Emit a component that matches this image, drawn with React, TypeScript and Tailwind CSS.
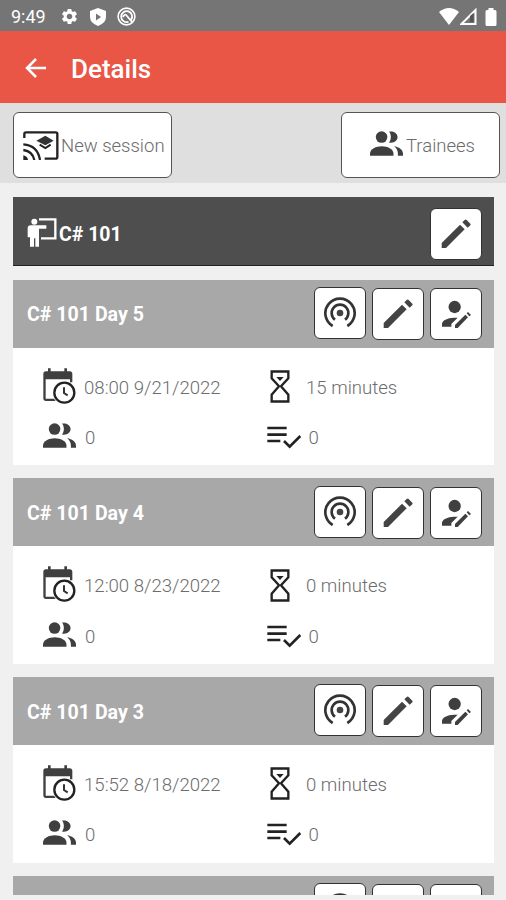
import type { ReactNode } from "react";
import { MdSettings } from "react-icons/md";

const sessions = [
  { id: "day-5", title: "C# 101 Day 5", date: "08:00 9/21/2022", duration: "15 minutes", trainees: 0, tasks: 0 },
  { id: "day-4", title: "C# 101 Day 4", date: "12:00 8/23/2022", duration: "0 minutes", trainees: 0, tasks: 0 },
  { id: "day-3", title: "C# 101 Day 3", date: "15:52 8/18/2022", duration: "0 minutes", trainees: 0, tasks: 0 },
];

const BackIcon = () => (
  <svg className="w-[21px] h-5" viewBox="0 0 21 20" fill="none" stroke="#fff" strokeWidth="2.500">
    <path d="M21 10H2.500M11 1l-9 9 9 9" />
  </svg>
);

const PeopleIcon = () => (
  <svg className="w-[33px] h-[25px] shrink-0" viewBox="0 0 97 72" fill="#3f3f3f">
    <circle cx="34" cy="17" r="17" />
    <path d="M56 1c14-3 25 5 25 16s-11 19-25 16c7-9 7-23 0-32z" />
    <path d="M0 72v-6c0-14 18-22 34.500-22S69 52 69 66v6z" />
    <path d="M71 44c14 2 26 10 26 22v6H82v-7c0-8-4-15-11-21z" />
  </svg>
);

const CastIcon = () => (
  <svg className="w-9 h-[29px] shrink-0" viewBox="69 391 108 87" fill="none" stroke="#222" strokeWidth="7">
    <path d="M73 412V400q0-5 5-5h89q5 0 5 5v69q0 5-5 5h-33" />
    <path d="M70 431q43 3 50 47M70 448q28 4 33 30" />
    <path d="M70 464q13 3 14 14H70z" fill="#222" stroke="none" />
    <path d="M109 420l27-15 25 15-25 14z" fill="#333" stroke="none" />
    <path d="M119 432l17 10 16-10" strokeWidth="6" />
  </svg>
);

const TeacherIcon = () => (
  <svg className="w-[30px] h-[29px] shrink-0" viewBox="82 100 90 87" fill="#fff">
    <circle cx="104" cy="111" r="9" />
    <path d="M84 131q0-9 9-9h47v10h-22v54h-11v-25h-4v25H91v-28h-7z" />
    <path d="M118 104h49v57h-43" fill="none" stroke="#fff" strokeWidth="7" />
  </svg>
);

const PencilIcon = () => (
  <svg className="w-[30px] h-[30px]" viewBox="564 104 90 90" fill="#444">
    <path d="M566 176l55-55 14 14-56 56h-13z" />
    <path d="M628 114l7-7q3-3 6 0l11 11q2 3 0 5l-8 7z" />
  </svg>
);

const BroadcastIcon = () => (
  <svg className="w-[34px] h-[32px]" viewBox="208 337 102 96" fill="none" stroke="#333" strokeWidth="8">
    <circle cx="259" cy="385" r="10" fill="#444" stroke="none" />
    <path d="M244 405a25 25 0 1 1 30 0" />
    <path d="M237 424a44 44 0 1 1 44 0" />
  </svg>
);

const UserEditIcon = () => (
  <svg className="w-[30px] h-[30px]" viewBox="567 346 90 90" fill="#3f3f3f">
    <circle cx="608" cy="370" r="18.500" />
    <path d="M570 429v-8c0-10 16-19 36-19h11l-19 19v8z" />
    <path d="M609 433v-9l31-31 8 8-31 32z" />
    <path d="M644 389l4-4 9 9-5 4z" />
  </svg>
);

const CalendarIcon = () => (
  <svg className="w-[33px] h-9 shrink-0" viewBox="134 84 99 108" fill="#3f3f3f">
    <path d="M149 85h8v9h41v-9h8v9h8q8 0 8 8v25h-7v-9h-73v58h25l5 7h-29q-8 0-8-8v-73q0-8 8-8h6z" />
    <circle cx="198" cy="158" r="30" fill="#fff" stroke="#222" strokeWidth="7" />
    <path d="M197 142v17l11 7" fill="none" stroke="#333" strokeWidth="6" />
  </svg>
);

const HourglassIcon = () => (
  <svg className="w-5 h-[33px]" viewBox="52 89 60 99" fill="none" stroke="#222" strokeWidth="7">
    <path d="M57 93.500h50V114l-22 24 22 25v20.500H57V163l22-25-22-24z" />
    <path d="M71 110h22l-11 12z" fill="#222" stroke="none" />
  </svg>
);

const ListCheckIcon = () => (
  <svg className="w-[34px] h-[23px]" viewBox="42 259 102 69" fill="none" stroke="#222" strokeWidth="8">
    <path d="M43 265h58M43 285h58M43 304h39M93 304l17 17 32-32" />
  </svg>
);

const StatusBar = () => (
  <div className="flex h-[31px] items-center bg-[#757575] pl-[11px] pr-[9px] pt-[2px] text-white">
    <span className="w-[49px] text-[18px] leading-none">9:49</span>
    <MdSettings className="size-[19px]" />
    <svg className="ml-[11px] w-4 h-[18px]" viewBox="0 0 16 18">
      <path d="M8 0l8 3v6q0 6-8 9-8-3-8-9V3z" fill="#fff" />
      <path d="M6 5.500l5 3.500-5 3.500z" fill="#757575" />
    </svg>
    <svg className="ml-[11px] size-[19px]" viewBox="0 0 19 19" fill="none" stroke="#fff">
      <circle cx="9.500" cy="9.500" r="8.400" strokeWidth="1.600" />
      <path d="M14 13a5.500 5.500 0 1 0-2.500 1.800M6 10q2-4 4-1l5 6" strokeWidth="1.800" />
    </svg>
    <svg className="ml-auto w-5 h-[17px]" viewBox="0 0 20 17" fill="#fff">
      <path d="M0 4q10-8 20 0L10 17z" />
    </svg>
    <svg className="ml-[1px] w-[17px] h-[17px]" viewBox="0 0 17 17">
      <path d="M15.500 2v14H1.500z" fill="none" stroke="#fff" strokeWidth="2" />
      <path d="M10 8l3.500-3v9H10z" fill="#555" />
    </svg>
    <svg className="ml-[8px] w-[12px] h-[18px]" viewBox="0 0 12 18" fill="#fff">
      <path d="M3.500 0h5v2H10q1.500 0 1.500 1.500v13Q11.500 18 10 18H2Q.5 18 .5 16.500v-13Q.5 2 2 2h1.500z" />
    </svg>
  </div>
);

const ActionButton = ({ label, children }: { label: string; children: ReactNode }) => (
  <button
    aria-label={label}
    className="flex h-[52px] w-[52px] items-center justify-center rounded-[6px] border border-[#333] bg-white"
  >
    {children}
  </button>
);

const SessionHeader = ({ title }: { title?: string }) => (
  <div className="flex h-[68px] shrink-0 items-center bg-[#a8a8a8] pl-[14px] pr-[12px]">
    <h2 className="flex-1 pt-[3px] text-[19.600px] font-bold text-white">{title}</h2>
    <div className="flex gap-[6px] pt-[1px]">
      <div className="-mt-[1px]">
        <ActionButton label="Broadcast">
          <BroadcastIcon />
        </ActionButton>
      </div>
      <ActionButton label="Edit">
        <PencilIcon />
      </ActionButton>
      <ActionButton label="Edit trainees">
        <UserEditIcon />
      </ActionButton>
    </div>
  </div>
);

const SessionCard = ({ session }: { session: (typeof sessions)[number] }) => (
  <div className="mb-[13px] h-[185.700px] shrink-0 bg-white">
    <SessionHeader title={session.title} />
    <div className="grid grid-cols-[223.500px_1fr] auto-rows-[50px] items-center pl-[30px] pt-[13px] text-[18.600px] font-light text-[#6c6c6c]">
      <div className="flex items-center gap-[8px]">
        <CalendarIcon />
        <span className="pt-[6px]">{session.date}</span>
      </div>
      <div className="flex items-center pt-[2px]">
        <span className="flex w-[39.500px] pl-[3px]">
          <HourglassIcon />
        </span>
        <span className="pt-[4px]">{session.duration}</span>
      </div>
      <div className="flex items-center gap-[9px]">
        <PeopleIcon />
        <span className="pt-[7px]">{session.trainees}</span>
      </div>
      <div className="flex items-center gap-[8px] pt-[4px]">
        <ListCheckIcon />
        <span className="pt-[3px]">{session.tasks}</span>
      </div>
    </div>
  </div>
);

const App = () => (
  <div className="flex h-[900px] w-[506px] flex-col overflow-hidden bg-[#f0f0f0] font-['Roboto',sans-serif]">
    <StatusBar />
    <header className="flex h-[72px] items-center bg-[#e95646] pl-[25px] pt-[2px] text-white">
      <BackIcon />
      <h1 className="ml-[25px] pt-[3px] text-[26px] font-medium">Details</h1>
    </header>
    <div className="flex h-[80px] items-center justify-between bg-[#dfdfdf] pl-[13px] pr-[6px] pt-[4px]">
      <button className="flex h-[66px] w-[159px] items-center rounded-[6px] border border-[#555] bg-white pl-[9px] text-[18.500px] font-light text-[#6c6c6c]">
        <CastIcon />
        <span className="ml-[2px] whitespace-nowrap pt-[4px]">New session</span>
      </button>
      <button className="flex h-[66px] w-[159px] items-center rounded-[6px] border border-[#555] bg-white pl-[28px] text-[18.500px] font-light text-[#6c6c6c]">
        <span className="-mt-[3px]">
          <PeopleIcon />
        </span>
        <span className="ml-[3px] pt-[4px]">Trainees</span>
      </button>
    </div>
    <main className="flex h-[712px] flex-col overflow-hidden pl-[13px] pr-[12px] pt-[14px]">
      <div className="mb-[13.500px] flex h-[69px] shrink-0 items-center border-b border-[#222] bg-[#4e4e4e] pl-[14px] pr-[12px]">
        <span className="pt-[2px]">
          <TeacherIcon />
        </span>
        <h2 className="ml-[2px] mt-[7px] flex-1 text-[19.500px] font-bold text-white">C# 101</h2>
        <div className="mt-[6px]">
          <ActionButton label="Edit course">
            <PencilIcon />
          </ActionButton>
        </div>
      </div>
      {sessions.map((session) => (
        <SessionCard key={session.id} session={session} />
      ))}
      <SessionHeader />
    </main>
  </div>
);

export default App;
